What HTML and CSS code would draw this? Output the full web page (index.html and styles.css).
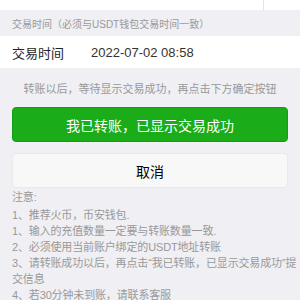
FILE: index.html
```html
<!DOCTYPE html>
<html lang="zh-CN">
<head>
    <meta charset="UTF-8">
    <meta name="viewport" content="width=device-width, initial-scale=1.0">
    <title>确认转账</title>
    <link rel="stylesheet" href="styles.css">
</head>

<body>
    <div class="top">
        <div class="top-cell"></div>
    </div>

    <div class="label">交易时间（必须与USDT钱包交易时间一致）</div>
    <div class="row">
        <span class="row-name">交易时间</span>
        <span class="row-value">2022-07-02 08:58</span>
    </div>

    <p class="hint">转账以后，等待显示交易成功，再点击下方确定按钮</p>

    <div class="actions">
        <button class="btn btn-primary">我已转账，已显示交易成功</button>
        <button class="btn btn-default">取消</button>
    </div>

    <div class="notes">
        <p class="notes-title">注意:</p>
        <p>1、推荐火币，币安钱包.</p>
        <p>1、输入的充值数量一定要与转账数量一致.</p>
        <p>2、必须使用当前账户绑定的USDT地址转账</p>
        <p>3、请转账成功以后，再点击“我已转账，已显示交易成功”提交信息</p>
        <p>4、若30分钟未到账，请联系客服</p>
    </div>
</body>
</html>
```

FILE: styles.css
```css
body {
    margin: 0;
    padding: 0;
    background-color: #efeff4;
    font-family: "Liberation Sans", "Noto Sans CJK SC", sans-serif;
    color: #333;
}

p {
    margin: 0;
}

.top {
    height: 10px;
    background: #fff;
}

    .top-cell {
        width: 263px;
        height: 100%;
        border-right: 1px solid #e5e5e5;
    }

.label {
    padding: 9px 12px 5px;
    font-size: 10px;
    line-height: 12px;
    color: #999;
}

.row {
    display: flex;
    align-items: center;
    height: 32px;
    padding: 0 12px;
    background: #fff;
    font-size: 13px;
}

.row-name {
    width: 79px;
    color: #222;
}

.row-value {
    color: #333;
}

.hint {
    padding: 15px 0 12px;
    font-size: 11px;
    line-height: 12px;
    text-align: center;
    color: #999;
}

.actions {
    display: flex;
    flex-direction: column;
    gap: 11px;
    padding: 0 12px;
}

.btn {
    display: block;
    width: 100%;
    height: 35px;
    border-radius: 4px;
    font-family: inherit;
    font-size: 14px;
    cursor: pointer;
}

.btn-primary {
    background-color: #1aad19;
    border: 1px solid #179b16;
    color: #fff;
}

.btn-default {
    background-color: #f8f8f8;
    border: 1px solid #eaeaea;
    color: #000;
}

.notes {
    padding: 1px 0 0 12px;
    font-size: 11px;
    line-height: 16px;
    letter-spacing: -0.15px;
    color: #999;
}

    .notes-title {
        margin-bottom: 2px;
    }
```
